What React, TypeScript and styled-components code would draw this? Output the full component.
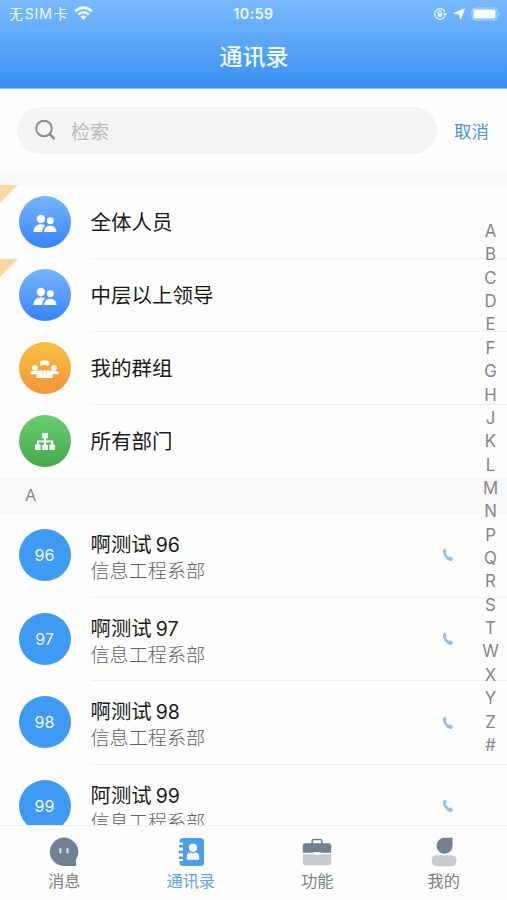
import React from "react";
import styled, { createGlobalStyle } from "styled-components";

const GlobalStyle = createGlobalStyle`
  * { box-sizing: border-box; }
  body {
    margin: 0;
    background: #fff;
    font-family: Inter, "Noto Sans CJK SC", sans-serif;
    color: #1a1a1a;
  }
`;

const Screen = styled.div`
  position: relative;
  display: flex;
  flex-direction: column;
  width: 507px;
  height: 900px;
  overflow: hidden;
  background: #fefefe;
`;

const Header = styled.header`
  flex: none;
  height: 89px;
  color: #f2faff;
  background: linear-gradient(#79b9ff 0%, #62abfa 38%, #3b91f2 96%, #3b91f2 98.5%, #8cc3f8 99%);
`;

const StatusBar = styled.div`
  display: grid;
  grid-template-columns: 1fr auto 1fr;
  align-items: center;
  height: 27px;
  padding: 0 6px 0 9px;
  font-size: 14px;
  line-height: 20px;
`;

const Carrier = styled.div`
  display: flex;
  align-items: center;
  gap: 6px;
  letter-spacing: 0.8px;
  white-space: nowrap;
`;

const CarrierName = styled.span`
  display: flex;
  gap: 1px;
`;

const Clock = styled.div`
  margin-left: -3px;
  font-size: 14.2px;
  font-weight: 600;
  letter-spacing: 0.5px;
`;

const StatusIcons = styled.div`
  display: flex;
  justify-content: flex-end;
  align-items: center;
  gap: 6px;
`;

const Title = styled.h1`
  margin: 12px 0 0;
  padding-left: 1px;
  font-size: 23px;
  line-height: 36px;
  font-weight: 500;
  text-align: center;
`;

const SearchBar = styled.div`
  flex: none;
  display: flex;
  align-items: center;
  height: 83px;
  padding: 0 17px;
`;

const SearchField = styled.div`
  display: flex;
  align-items: center;
  gap: 15px;
  width: 420px;
  height: 47px;
  padding-left: 18px;
  border-radius: 24px;
  background: #f4f4f4;
  color: #b9b9b9;
  font-size: 19px;
`;

const Cancel = styled.button`
  margin-left: 17px;
  padding: 0;
  border: 0;
  background: none;
  color: #4b94da;
  font: inherit;
  font-size: 17.4px;
`;

const Band = styled.div`
  flex: none;
  height: 13px;
  background: #f9f9f9;
`;

const List = styled.main`
  flex: 1;
  min-height: 0;
  overflow: hidden;
`;

const Row = styled.div<{ $height: number; $flag?: boolean }>`
  display: flex;
  height: ${(p) => p.$height}px;
  padding-left: 18.5px;
  background: ${(p) =>
    p.$flag ? "linear-gradient(135deg, #fbd6a0 12.3px, transparent 13px) 0 0 / 30px 30px no-repeat" : "none"};
`;

const Avatar = styled.div<{ $fill: string; $top: number; $drop?: number }>`
  flex: none;
  display: grid;
  place-items: center;
  width: 52px;
  height: 52px;
  margin-top: ${(p) => p.$top}px;
  padding-top: ${(p) => (p.$drop ?? 0) * 2}px;
  border-radius: 50%;
  background: ${(p) => p.$fill};
  color: #f4faff;
  font-size: 16px;
`;

const RowBody = styled.div<{ $line: boolean }>`
  flex: 1;
  display: flex;
  align-items: center;
  margin-left: 20px;
  border-bottom: 1px solid ${(p) => (p.$line ? "#f0f0f0" : "transparent")};
`;

const GroupName = styled.div`
  padding-top: 2px;
  font-size: 20.5px;
  line-height: 30px;
`;

const SectionHeading = styled.div`
  height: 36px;
  padding-left: 25px;
  background: #f8f8f8;
  color: #8a8a8a;
  font-size: 16.5px;
  line-height: 35px;
`;

const ContactText = styled.div`
  width: 351px;
  padding-top: 5px;
`;

const ContactName = styled.div`
  display: flex;
  gap: 4px;
  font-size: 20.4px;
  line-height: 26px;
`;

const Digits = styled.span`
  font-size: 19.5px;
`;

const Department = styled.div`
  font-size: 19.1px;
  line-height: 26px;
  font-weight: 300;
  color: #606060;
`;

const IndexRail = styled.nav`
  position: absolute;
  top: 220px;
  right: 4.5px;
  display: flex;
  flex-direction: column;
  width: 24px;
  color: #858585;
  font-size: 16.8px;
  line-height: 23.36px;
  text-align: center;
`;

const TabBar = styled.footer`
  flex: none;
  display: grid;
  grid-template-columns: repeat(4, 1fr);
  height: 75px;
  padding-left: 1px;
  border-top: 1px solid #f0f0f0;
`;

const Tab = styled.div<{ $active?: boolean }>`
  display: flex;
  flex-direction: column;
  align-items: center;
  padding-top: 11px;
  color: ${(p) => (p.$active ? "#58a6e8" : "#7d8082")};
  font-size: 16.2px;
  line-height: 24px;

  svg { margin-bottom: 2px; }
`;

const WifiIcon = () => (
  <svg width="19" height="15" viewBox="0 0 19 15" fill="none" stroke="#f6fbff" strokeWidth="2.6">
    <path d="M1.2 5.2Q9.5-1.8 17.8 5.2M4.2 8.5Q9.5 4 14.8 8.5" />
    <path d="M6.4 10.8Q9.5 8.2 12.6 10.8L9.5 14Z" fill="#f6fbff" stroke="none" />
  </svg>
);

const RotationLockIcon = () => (
  <svg width="14" height="14" viewBox="0 0 14 14" fill="none" stroke="#e3f2ff" strokeWidth="1.3">
    <path d="M11.8 9.3A5.3 5.3 0 1 1 12 5.2M10.2 6.2L12.1 8.3 13.6 6" />
    <path d="M5.3 6.5V5.4a1.5 1.5 0 0 1 3 0v1.1" />
    <path d="M4.6 6.4h4.5v3.3H4.6z" fill="#e3f2ff" stroke="none" />
  </svg>
);

const LocationIcon = () => (
  <svg width="12" height="12" viewBox="0 0 12 12">
    <path d="M11.5.8L7.6 11.1 6.2 6.1.8 5.4Z" fill="#f8fcff" stroke="#f8fcff" strokeWidth="1" strokeLinejoin="round" />
  </svg>
);

const BatteryIcon = () => (
  <svg width="30" height="14" viewBox="0 0 30 14">
    <rect x="1" y="1" width="25" height="12" rx="3" fill="none" stroke="#b0d7ff" />
    <rect x="2.500" y="2.500" width="22" height="9" rx="1.4" fill="#fff" />
    <path d="M27.5 4.8q2.5 2.2 0 4.4z" fill="#b0d7ff" />
  </svg>
);

const SearchIcon = () => (
  <svg width="21" height="21" viewBox="0 0 21 21" fill="none" stroke="#8c8c8c" strokeWidth="1.9">
    <circle cx="9" cy="8.500" r="7.800" />
    <path d="M14.300 13.800L19.500 19" strokeWidth="2.500" />
  </svg>
);

const PeopleIcon = () => (
  <svg width="24" height="19" viewBox="0 0 24 19" fill="#fff">
    <circle cx="7.9" cy="5" r="4.2" />
    <circle cx="17.3" cy="6.7" r="3.4" />
    <path d="M.5 18c0-5 3.1-7.8 7.5-7.8 1.7 0 3.2.4 4.4 1.2-2 1.5-3.1 3.7-3.1 6.6z" />
    <path d="M11 18c0-3.8 2.5-6.3 6.2-6.3s6.3 2.5 6.3 6.3z" />
  </svg>
);

const MeetingIcon = () => (
  <svg width="29" height="19" viewBox="0 0 29 19" fill="#fff">
    <path d="M10 5V2.500Q10 .6 12 .6h5q2 0 2 1.900V5l-1 .8h-1l-.8-.8h-3.400l-.8.800H11z" />
    <circle cx="5" cy="7.800" r="2.900" />
    <circle cx="24" cy="7.800" r="2.900" />
    <path d="M.3 14.2q0-3.4 3.3-3.4h4l3.2-.4h7.5l3.2.4h3.9q3.3 0 3.3 3.4h-6l-.2.8h.2v3H6.5v-3h.2l-.3-.8z" />
    <path d="M12.7 10.9v3.4M16.3 10.9v3.4" stroke="#f8c779" strokeWidth=".8" />
  </svg>
);

const OrgIcon = () => (
  <svg width="20" height="19" viewBox="0 0 20 19" fill="#fff">
    <path d="M7.2 1h5.6v5.2h-1.6v2.3h7v4.2H20V18h-5.6v-5.3h1.7v-2.4h-4.9v2.4h1.7V18H7.2v-5.3h1.7v-2.4H4v2.4h1.6V18H0v-5.3h1.9V8.5h7V6.2H7.2z" />
  </svg>
);

const PhoneIcon = () => (
  <svg width="12" height="14" viewBox="0 0 12 14">
    <path d="M1 2.2L2.6.7q.7-.3 1 .5l.9 2q.3.7-.3 1.2l-.6.5q1 2.500 3.200 4.200l.9-.5q.6-.3 1.100.1l2 1.400q.6.500.2 1.100L9.800 12.800C6.200 14 .3 7.700 1 2.200z" fill="#93bfeb" />
  </svg>
);

const MessageIcon = () => (
  <svg width="30" height="30" viewBox="0 0 30 30">
    <path d="M27.500 29H15A14.200 14.200 0 1 1 27 22.500q-.6 2.500 .5 6.500z" fill="#708191" />
    <path d="M11.400 12v3.400M18.400 12v3.400" stroke="#dce7f0" strokeWidth="2" strokeLinecap="round" />
  </svg>
);

const AddressBookIcon = () => (
  <svg width="30" height="30" viewBox="0 0 30 30">
    <path d="M7 1h17.500Q28 1 28 4.500v21Q28 29 24.500 29H7q-3.500 0-3.500-3.500V24H7v-2H2.800v-2.500H7v-3.300H2.800v-2.500H7v-3.300H2.800V7.900H7V5.600H3.500V4.500Q3.500 1 7 1z" fill="#4ba0e8" />
    <circle cx="17" cy="10.800" r="4.100" fill="#fff" />
    <path d="M10.8 22.7v-2.5q0-4.2 3.4-4.7l2.8 1 2.8-1q3.4.5 3.4 4.7v2.5z" fill="#fff" />
  </svg>
);

const BriefcaseIcon = () => (
  <svg width="30" height="30" viewBox="0 0 30 30">
    <path d="M10.2 7V4q0-1.500 1.500-1.500h6.600q1.500 0 1.500 1.500v3" fill="none" stroke="#708191" strokeWidth="1.700" />
    <path d="M.8 15.800V8.500q0-2.300 2.300-2.300h23.800q2.300 0 2.300 2.300v7.300z" fill="#708191" />
    <path d="M.8 17.200h28.400V26q0 2.200-2.300 2.200H3.100Q.8 28.200 .8 26z" fill="#c7cbd0" />
    <path d="M11.500 15.200h7v1.700q-3.500 2.200-7 0z" fill="#fff" />
  </svg>
);

const ProfileIcon = () => (
  <svg width="30" height="30" viewBox="0 0 30 30">
    <path d="M15 .8h8.500v7.700A8 8 0 1 1 15 .8z" fill="#708191" />
    <rect x="2.700" y="18.200" width="24.800" height="11" rx="4.800" fill="#c7cbd0" />
  </svg>
);

const BLUE = "linear-gradient(#76b5fb, #3784f7)";

const groups = [
  { name: "全体人员", fill: BLUE, icon: <PeopleIcon />, flag: true, drop: 1.5 },
  { name: "中层以上领导", fill: BLUE, icon: <PeopleIcon />, flag: true, drop: 1.5 },
  { name: "我的群组", fill: "linear-gradient(#f8bf42, #f49538)", icon: <MeetingIcon />, flag: false, drop: 1.5 },
  { name: "所有部门", fill: "linear-gradient(#67cf70, #48a94e)", icon: <OrgIcon />, flag: false, drop: 0 },
];

const contacts = [
  { name: "啊测试", number: "96" },
  { name: "啊测试", number: "97" },
  { name: "啊测试", number: "98" },
  { name: "阿测试", number: "99" },
];

const tabs = [
  { label: "消息", icon: <MessageIcon /> },
  { label: "通讯录", icon: <AddressBookIcon />, active: true },
  { label: "功能", icon: <BriefcaseIcon /> },
  { label: "我的", icon: <ProfileIcon /> },
];

export default function App() {
  return (
    <Screen>
      <GlobalStyle />
      <Header>
        <StatusBar>
          <Carrier>
            <CarrierName><span>无</span><span>SIM</span><span>卡</span></CarrierName>
            <WifiIcon />
          </Carrier>
          <Clock>10:59</Clock>
          <StatusIcons>
            <RotationLockIcon />
            <LocationIcon />
            <BatteryIcon />
          </StatusIcons>
        </StatusBar>
        <Title>通讯录</Title>
      </Header>
      <SearchBar>
        <SearchField><SearchIcon />检索</SearchField>
        <Cancel>取消</Cancel>
      </SearchBar>
      <Band />
      <List>
        {groups.map((g, i) => (
          <Row key={g.name} $height={i === 0 ? 74 : 73} $flag={g.flag}>
            <Avatar $fill={g.fill} $top={i === 0 ? 11 : 10} $drop={g.drop}>{g.icon}</Avatar>
            <RowBody $line={i < groups.length - 1}>
              <GroupName>{g.name}</GroupName>
            </RowBody>
          </Row>
        ))}
        <SectionHeading>A</SectionHeading>
        {contacts.map((c) => (
          <Row key={c.number} $height={83.7}>
            <Avatar $fill="#3e9af3" $top={15}>{c.number}</Avatar>
            <RowBody $line>
              <ContactText>
                <ContactName>{c.name}<Digits>{c.number}</Digits></ContactName>
                <Department>信息工程系部</Department>
              </ContactText>
              <PhoneIcon />
            </RowBody>
          </Row>
        ))}
      </List>
      <IndexRail>
        {"ABCDEFGHJKLMNPQRSTWXYZ#".split("").map((l) => <span key={l}>{l}</span>)}
      </IndexRail>
      <TabBar>
        {tabs.map((t) => (
          <Tab key={t.label} $active={t.active}>{t.icon}{t.label}</Tab>
        ))}
      </TabBar>
    </Screen>
  );
}
